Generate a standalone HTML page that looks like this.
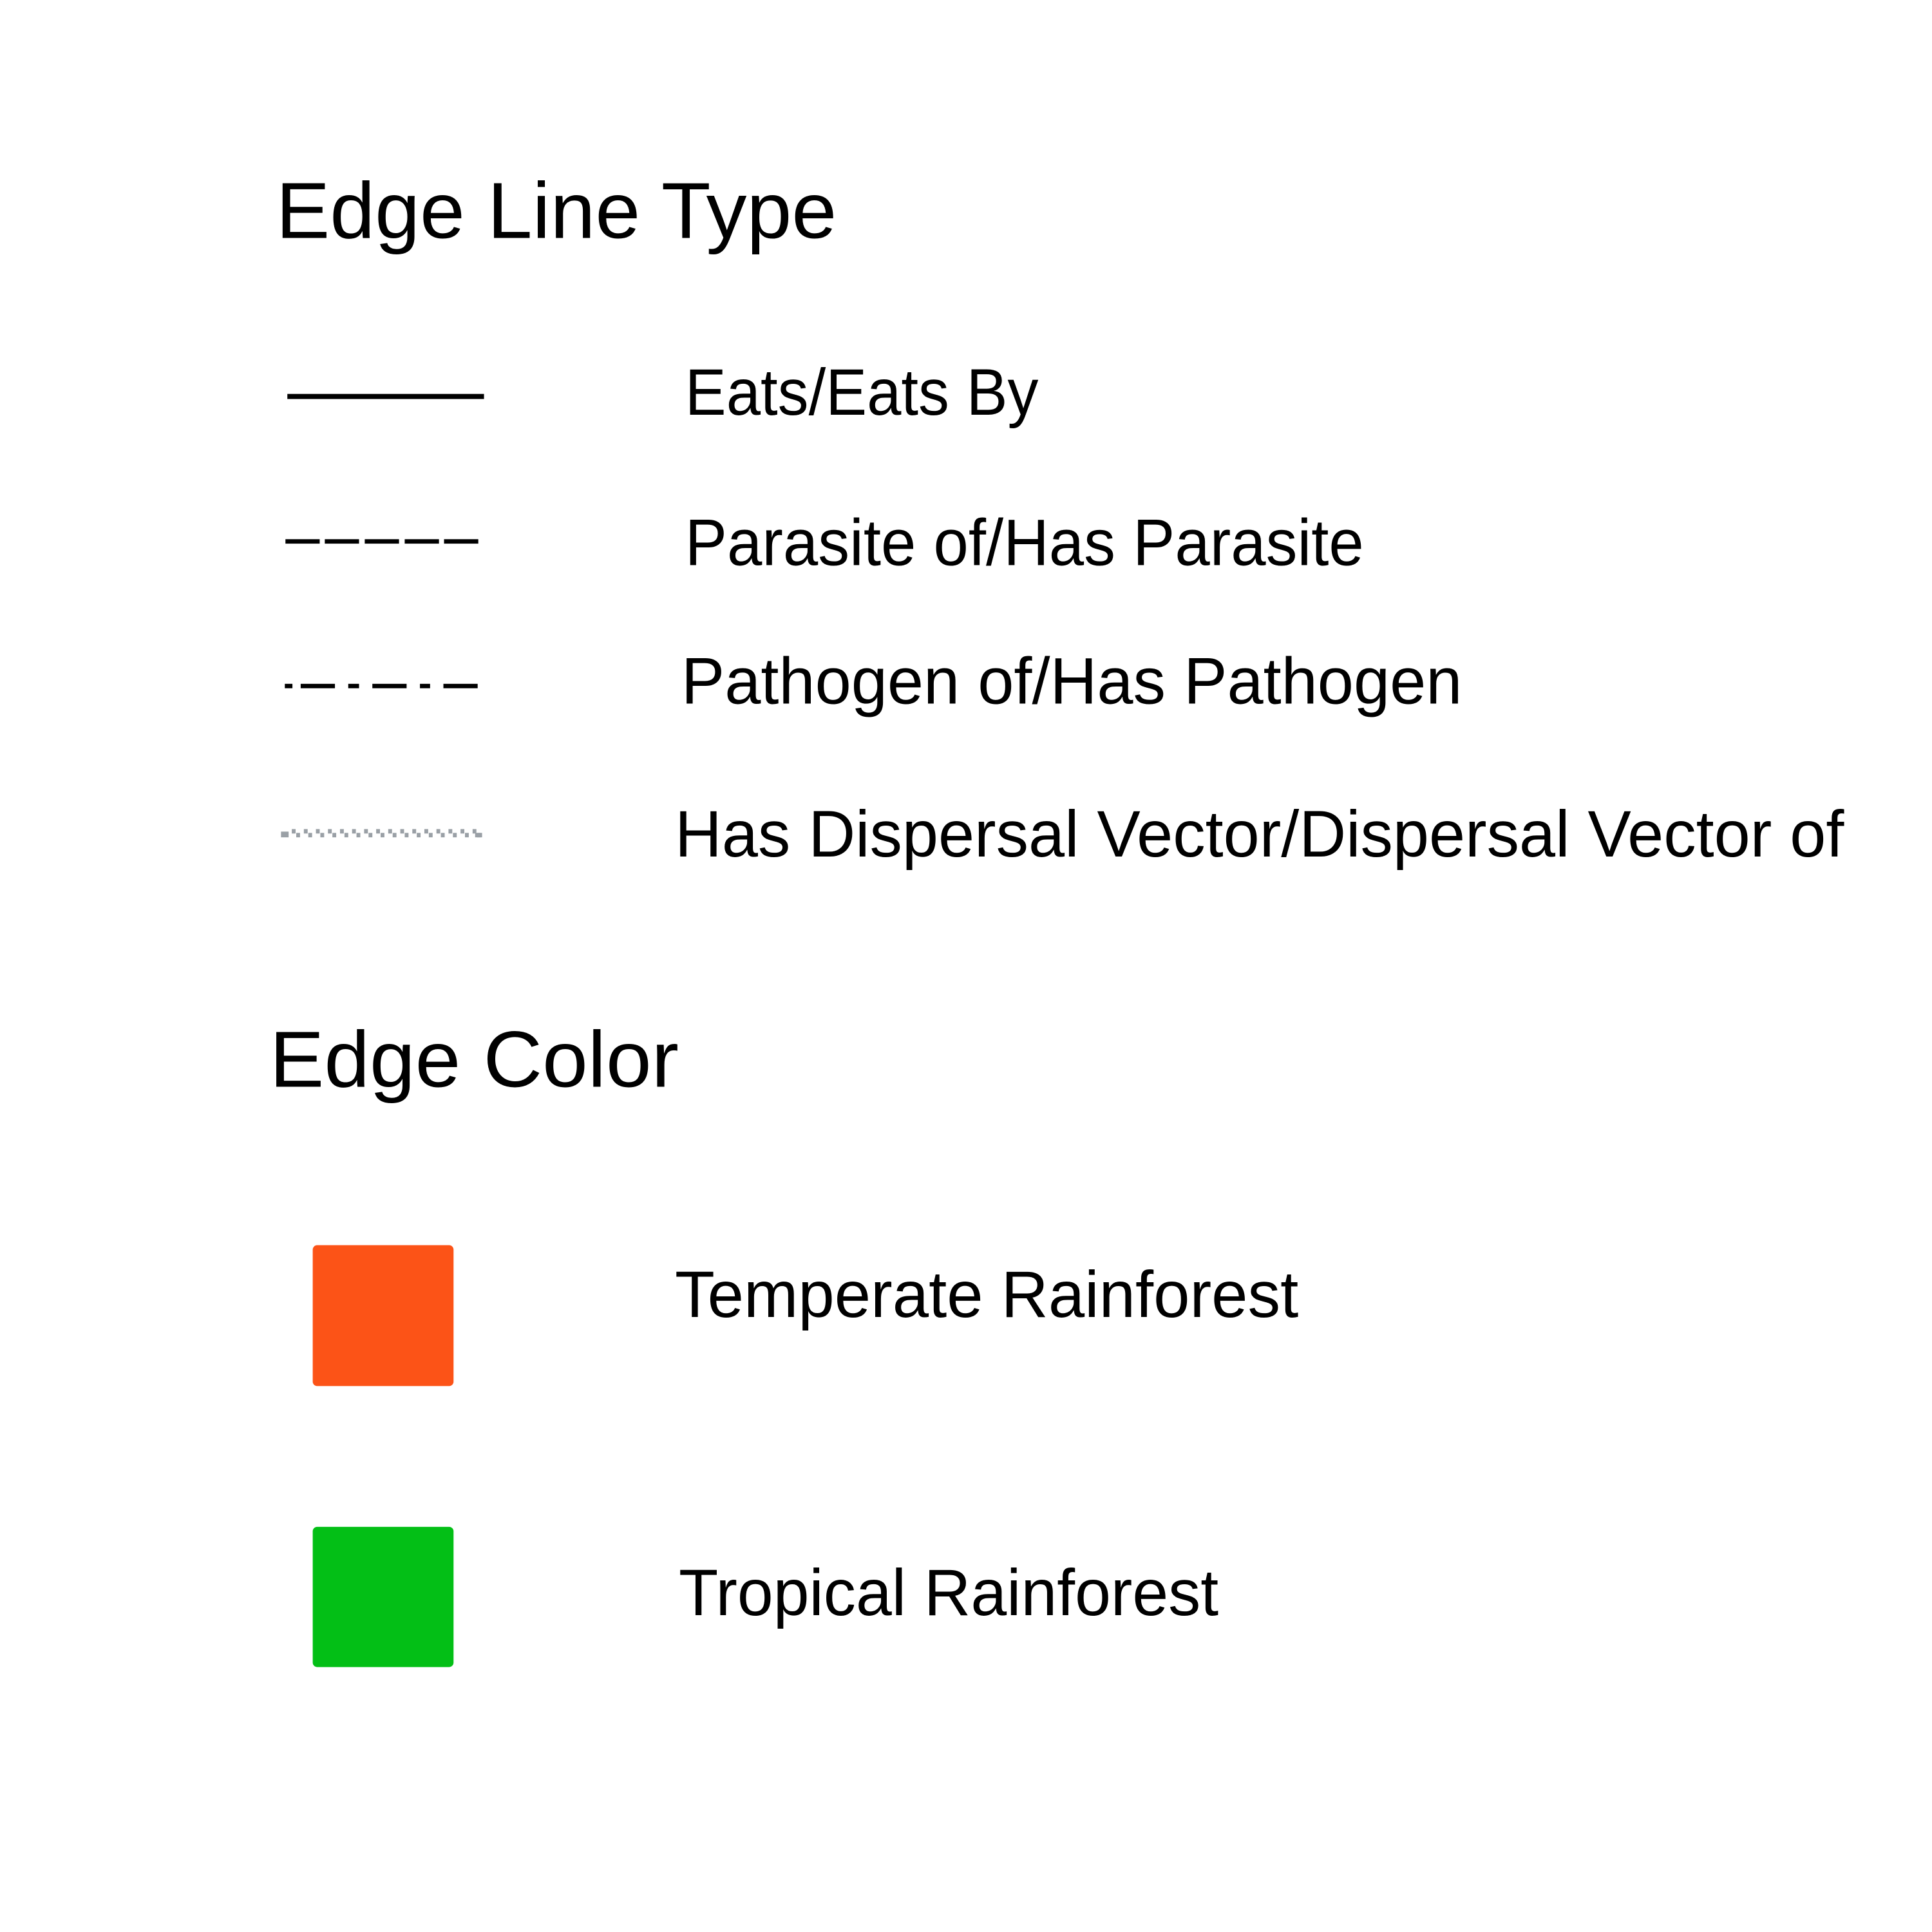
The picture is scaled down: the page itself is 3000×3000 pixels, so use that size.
<!DOCTYPE html>
<html><head><meta charset="utf-8"><style>
html,body{margin:0;padding:0;background:#fff;}
svg{display:block;}
text{font-family:"Liberation Sans",sans-serif;fill:#000;}
</style></head><body>
<svg width="3000" height="3000" viewBox="0 0 3000 3000" xmlns="http://www.w3.org/2000/svg">
<rect width="3000" height="3000" fill="#fff"/>
<g transform="scale(0.985)">
<text x="435" y="375" font-size="125" textLength="884" lengthAdjust="spacingAndGlyphs">Edge Line Type</text>

<g transform="translate(6,0)">
<rect x="447" y="621" width="310" height="8" fill="#000"/>
<g fill="#000">
<rect x="444" y="850" width="54" height="7"/>
<rect x="506" y="850" width="54" height="7"/>
<rect x="569" y="850" width="54" height="7"/>
<rect x="632" y="850" width="54" height="7"/>
<rect x="694" y="850" width="54" height="7"/>
</g>
<g fill="#000">
<rect x="443" y="1078" width="12" height="7"/>
<rect x="468" y="1078" width="54" height="7"/>
<rect x="543" y="1078" width="17" height="7"/>
<rect x="581" y="1078" width="54" height="7"/>
<rect x="656" y="1078" width="16" height="7"/>
<rect x="693" y="1078" width="54" height="7"/>
</g>
<g fill="#9aa0a6">
<rect x="437" y="1311" width="12" height="9"/>
<g id="d"><rect x="454" y="1307" width="6" height="7"/><rect x="461" y="1313" width="6" height="7"/></g>
<use href="#d" x="19"/><use href="#d" x="38"/><use href="#d" x="57"/><use href="#d" x="76"/>
<use href="#d" x="95"/><use href="#d" x="114"/><use href="#d" x="133"/><use href="#d" x="152"/>
<use href="#d" x="171"/><use href="#d" x="190"/><use href="#d" x="209"/><use href="#d" x="228"/>
<use href="#d" x="247"/><use href="#d" x="266"/><use href="#d" x="285"/>
<rect x="743" y="1313" width="11" height="7"/>
</g>
</g>

<text x="1080" y="654" font-size="104" textLength="557" lengthAdjust="spacingAndGlyphs">Eats/Eats By</text>
<text x="1080" y="891" font-size="104" textLength="1070" lengthAdjust="spacingAndGlyphs">Parasite of/Has Parasite</text>
<text x="1074" y="1109" font-size="104" textLength="1231" lengthAdjust="spacingAndGlyphs">Pathogen of/Has Pathogen</text>
<text x="1064" y="1350" font-size="104" textLength="1843" lengthAdjust="spacingAndGlyphs">Has Dispersal Vector/Dispersal Vector of</text>

<text x="425" y="1713" font-size="125" textLength="645" lengthAdjust="spacingAndGlyphs">Edge Color</text>

<rect x="493" y="1963" width="222" height="222" rx="7" fill="#fc5317"/>
<text x="1064" y="2076" font-size="104" textLength="983" lengthAdjust="spacingAndGlyphs">Temperate Rainforest</text>

<rect x="493" y="2407" width="222" height="221" rx="7" fill="#03bf16"/>
<text x="1070" y="2546" font-size="104" textLength="851" lengthAdjust="spacingAndGlyphs">Tropical Rainforest</text>
</g>
</svg>
</body></html>
